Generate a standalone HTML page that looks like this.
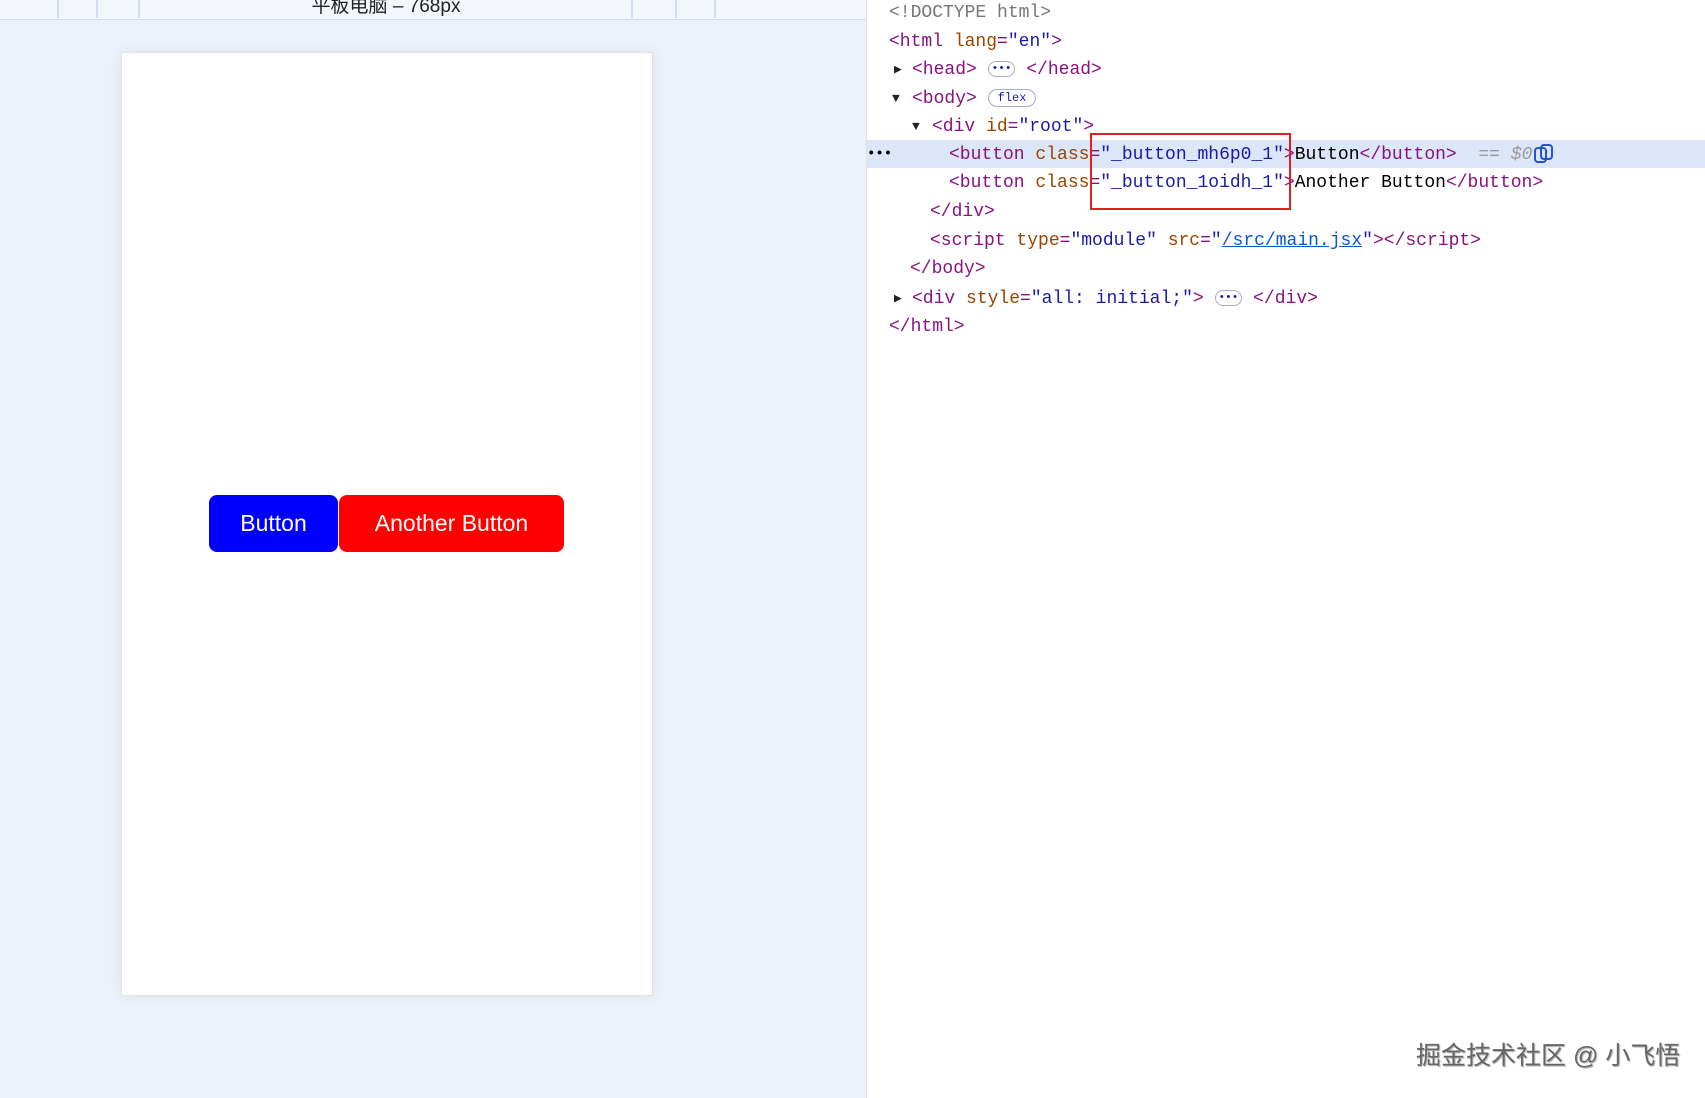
<!DOCTYPE html>
<html><head><meta charset="utf-8"><style>
body{margin:0;width:1705px;height:1098px;position:relative;overflow:hidden;background:#fff;font-family:"Liberation Sans",sans-serif}
#left{position:absolute;left:0;top:0;width:866px;height:1098px;background:#ecf1f9;border-right:1px solid #dde3ec}
#bar{position:absolute;left:0;top:0;width:866px;height:19px;background:#f3f6fb;border-bottom:1px solid #d6dde8}
.tick{position:absolute;top:0;height:18px;width:2px;background:#d5def0}
#bar .t{position:absolute;left:0;width:772px;text-align:center;top:-9px;font-size:19px;color:#222;font-family:"Liberation Sans","Noto Sans CJK SC",sans-serif}
#card{position:absolute;left:121px;top:52px;width:530px;height:942px;background:#fff;border:1px solid #dfe3e8;box-shadow:0 0 14px rgba(0,0,0,.06)}
.btn{position:absolute;top:495px;height:57px;color:#fff;font-size:23px;display:flex;align-items:center;justify-content:center;border-radius:8px;font-family:"Liberation Sans",sans-serif}
#dev{position:absolute;left:867px;top:0;right:0;bottom:0;font-family:"Liberation Mono",monospace;font-size:18px}
.l{position:absolute;white-space:pre;height:28px;line-height:28px}
.tg{color:#881280}.an{color:#994500}.av{color:#1a1aa6}.gr{color:#777}
.tri{position:absolute;font-size:13px;color:#222}
.dots{display:inline-block;border:1px solid #aac;border-radius:9px;font-size:11px;color:#1a1aa6;line-height:14px;padding:0 3px;vertical-align:middle}
</style></head><body>
<div id="left">
<div id="bar"><div class="tick" style="left:57px"></div><div class="tick" style="left:96px"></div><div class="tick" style="left:138px"></div><div class="tick" style="left:631px"></div><div class="tick" style="left:675px"></div><div class="tick" style="left:714px"></div><div class="t">平板电脑 – 768px</div></div>
<div id="card"></div>
<div class="btn" style="left:209px;width:129px;background:#0000ff">Button</div>
<div class="btn" style="left:339px;width:225px;background:#ff0000">Another Button</div>
</div>
<div id="dev">
<div style="position:absolute;left:0;right:0;top:140px;height:28px;background:#dbe6f9"></div>
<div class="l" style="left:22px;top:-1px"><span class="gr">&lt;!DOCTYPE html&gt;</span></div>
<div class="l" style="left:22px;top:28px"><span class="tg">&lt;html </span><span class="an">lang</span><span class="tg">=</span><span class="av">"en"</span><span class="tg">&gt;</span></div>
<div class="tri" style="left:27px;top:62px">▶</div>
<div class="l" style="left:45px;top:56px"><span class="tg">&lt;head&gt;</span> <span class="dots">•••</span> <span class="tg">&lt;/head&gt;</span></div>
<div class="tri" style="left:25px;top:91px">▼</div>
<div class="l" style="left:45px;top:85px"><span class="tg">&lt;body&gt;</span> <span class="dots" style="font-family:'Liberation Mono';font-size:12px;padding:1px 9px">flex</span></div>
<div class="tri" style="left:45px;top:119px">▼</div>
<div class="l" style="left:65px;top:113px"><span class="tg">&lt;div </span><span class="an">id</span><span class="tg">=</span><span class="av">"root"</span><span class="tg">&gt;</span></div>
<div class="l" style="left:0px;top:140px;font-weight:bold;font-size:14px">•••</div>
<div class="l" style="left:82px;top:141px"><span class="tg">&lt;button </span><span class="an">class</span><span class="tg">=</span><span class="av">"_button_mh6p0_1"</span><span class="tg">&gt;</span>Button<span class="tg">&lt;/button&gt;</span> <span class="gr" style="color:#999"> == <i>$0</i></span></div>
<svg style="position:absolute;left:665px;top:143px" width="24" height="22" viewBox="0 0 24 22" fill="none" stroke="#2255cc" stroke-width="2"><rect x="3" y="5" width="11" height="14" rx="3"/><rect x="9" y="2" width="11" height="14" rx="3"/></svg>
<div class="l" style="left:82px;top:169px"><span class="tg">&lt;button </span><span class="an">class</span><span class="tg">=</span><span class="av">"_button_1oidh_1"</span><span class="tg">&gt;</span>Another Button<span class="tg">&lt;/button&gt;</span></div>
<div class="l" style="left:63px;top:198px"><span class="tg">&lt;/div&gt;</span></div>
<div class="l" style="left:63px;top:227px"><span class="tg">&lt;script </span><span class="an">type</span><span class="tg">=</span><span class="av">"module"</span> <span class="an">src</span><span class="tg">=</span><span class="av">"<u style="color:#1155cc">/src/main.jsx</u>"</span><span class="tg">&gt;&lt;/script&gt;</span></div>
<div class="l" style="left:43px;top:255px"><span class="tg">&lt;/body&gt;</span></div>
<div class="tri" style="left:27px;top:291px">▶</div>
<div class="l" style="left:45px;top:285px"><span class="tg">&lt;div </span><span class="an">style</span><span class="tg">=</span><span class="av">"all: initial;"</span><span class="tg">&gt;</span> <span class="dots">•••</span> <span class="tg">&lt;/div&gt;</span></div>
<div class="l" style="left:22px;top:313px"><span class="tg">&lt;/html&gt;</span></div>
<div style="position:absolute;left:223px;top:133px;width:197px;height:73px;border:2px solid #e02020"></div>
</div>
<div style="position:absolute;left:1416px;top:1036px;font-size:25px;color:#666;text-shadow:1px 1px 1px #aaa;font-family:'Liberation Sans','Noto Sans CJK SC',sans-serif">掘金技术社区 @ 小飞悟</div>
</body></html>
